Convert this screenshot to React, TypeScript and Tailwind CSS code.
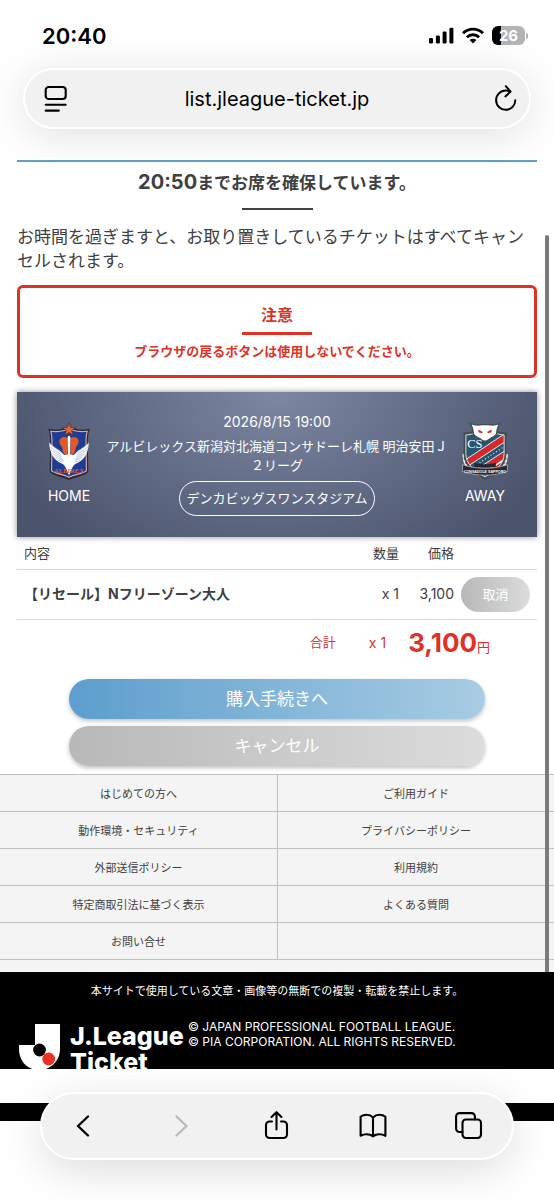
import React from "react";

interface FooterLink {
  label: string;
  href: string;
}

interface CartItem {
  id: number;
  name: string;
  quantity: number;
  price: string;
}

const footerLinks: FooterLink[] = [
  { label: "はじめての方へ", href: "#beginner" },
  { label: "ご利用ガイド", href: "#guide" },
  { label: "動作環境・セキュリティ", href: "#security" },
  { label: "プライバシーポリシー", href: "#privacy" },
  { label: "外部送信ポリシー", href: "#external" },
  { label: "利用規約", href: "#terms" },
  { label: "特定商取引法に基づく表示", href: "#law" },
  { label: "よくある質問", href: "#faq" },
  { label: "お問い合せ", href: "#contact" },
];

const cartItems: CartItem[] = [
  { id: 1, name: "【リセール】Nフリーゾーン大人", quantity: 1, price: "3,100" },
];

const StatusBar: React.FC = () => (
  <div className="flex h-[68px] items-center justify-between pt-[3px] pr-[26px] pl-[42px]">
    <span className="text-[22px] leading-6 font-semibold text-black">20:40</span>
    <div className="flex items-center gap-2">
      <svg width="25" height="17" viewBox="0 0 25 17">
        <rect x="0" y="11" width="4" height="5.5" rx="1.3" />
        <rect x="6.9" y="8.4" width="4" height="8.1" rx="1.3" />
        <rect x="13.6" y="4.600" width="4" height="11.900" rx="1.3" />
        <rect x="20.4" y="0.7" width="4" height="15.800" rx="1.3" />
      </svg>
      <svg width="22" height="17" viewBox="0 0 22 17">
        <g fill="none" stroke="#000" strokeWidth="2.900">
          <path d="M1 6.200a14.200 14.200 0 0 1 20 0" />
          <path d="M4.900 10.300a8.700 8.700 0 0 1 12.200 0" />
        </g>
        <path d="M11 16.6 7.6 13.1a4.8 4.8 0 0 1 6.8 0Z" />
      </svg>
      <div className="flex items-center gap-px">
        <div className="flex h-[19px] w-[33px] items-center justify-center rounded-md bg-linear-to-r from-black from-26% to-[#b3b3b3] to-26% text-[15px] leading-none font-bold text-white">
          26
        </div>
        <div className="h-[6px] w-[2px] rounded-r bg-[#b3b3b3]" />
      </div>
    </div>
  </div>
);

const AddressBar: React.FC = () => (
  <div className="mx-[23px] grid h-[61px] grid-cols-[1fr_auto_1fr] items-center rounded-full border-2 border-white bg-[#f1f1f1] px-3 shadow-[0_6px_44px_rgba(0,0,0,0.13)]">
    <button type="button" aria-label="ページメニュー" className="justify-self-start pl-[6px]">
      <svg
        width="26"
        height="28"
        viewBox="0 0 26 28"
        fill="none"
        stroke="#000"
        strokeWidth="2.1"
        strokeLinecap="round"
      >
        <rect x="2.7" y="2" width="20" height="12" rx="3" />
        <path d="M2.7 19.8h20M2.7 25.6h13.2" />
      </svg>
    </button>
    <span className="text-[20px] leading-6 text-black">list.jleague-ticket.jp</span>
    <button type="button" aria-label="再読み込み" className="justify-self-end">
      <svg
        width="24"
        height="28"
        viewBox="0 0 24 28"
        fill="none"
        stroke="#000"
        strokeWidth="2"
        strokeLinecap="round"
        strokeLinejoin="round"
      >
        <path d="M22.3 15.200a9.600 9.600 0 1 1-9.600-9.600c1.800 0 3 .2 4.400 1" />
        <path d="M12.800 1.200 17.600 6.600l-5.200 4.800" />
      </svg>
    </button>
  </div>
);

const HomeCrest: React.FC = () => (
  <svg width="42" height="58" viewBox="24 26 124 176" role="img" aria-label="アルビレックス新潟">
    <path
      d="M27 50c14 4 30 2 45-3l14-2 14 2c15 5 31 7 45 3-5 17-5 34-4 62l1 65c-14 14-35 11-56 22-21-11-42-8-56-22l1-65c1-28 1-45-4-62Z"
      fill="#1f3c94"
      stroke="#292936"
      strokeWidth="5"
    />
    <path
      d="M31 54c15 2 30 1 44-3l11-2 11 2c14 4 29 5 44 3-4 17-4 33-3 58l1 62c-14 11-34 9-53 20-19-11-39-9-53-20l1-62c1-25 1-41-3-58Z"
      fill="none"
      stroke="#dcac98"
      strokeWidth="3.500"
    />
    <path
      d="m86 28 5 14 15 1-12 9 5 15-13-9-13 9 5-15-12-9 15-1Z"
      fill="#e56538"
      stroke="#3a3438"
      strokeWidth="2"
    />
    <path
      d="M82 76c-6-8-24-6-25 7-1 10 6 16 9 22 0 14 6 22 16 22ZM90 76c6-8 24-6 25 7 1 10-6 16-9 22 0 14-6 22-16 22Z"
      fill="#e0592b"
    />
    <path
      d="M86 68c3 0 5 4 4 10l-1 46c8 4 13 3 17-3 8-12 24-15 40-33-1 33-15 55-38 64-8 4-10 8-17 24l-5 12-5-12c-7-16-9-20-17-24-23-9-37-31-38-64 16 18 32 21 40 33 4 6 9 7 17 3l-1-46c-1-6 1-10 4-10Z"
      fill="#fff"
    />
    <g stroke="#7f95cb" strokeWidth="1.6">
      <path d="m28 92 34 27M29 102l34 24M32 112l32 20M37 122l29 16M43 132l25 11M52 142l18 6" />
      <path d="m144 92-34 27M143 102l-34 24M140 112l-32 20M135 122l-29 16M129 132l-25 11M120 142l-18 6" />
    </g>
    <text
      x="86"
      y="181"
      textAnchor="middle"
      fontSize="20"
      fontFamily="Liberation Serif, serif"
      fontWeight="bold"
      fill="#d0603f"
    >
      ALBIREX
    </text>
  </svg>
);

const AwayCrest: React.FC = () => (
  <svg width="50" height="58" viewBox="20 28 150 176" role="img" aria-label="北海道コンサドーレ札幌">
    <path
      d="M25 122c0 22 5 38 15 46l15 4V134ZM166 122c0 22-5 38-15 46l-15 4V134Z"
      fill="#f1f1ef"
      stroke="#555"
      strokeWidth="3"
    />
    <path
      d="M30 139l22 9M34 152l19 5M161 139l-22 9M157 152l-19 5"
      stroke="#555"
      strokeWidth="3"
    />
    <path
      d="M34 64c13 0 24-3 34-9h54c10 6 21 9 34 9v60c0 37-29 54-61 75-32-21-61-38-61-75Z"
      fill="#285670"
      stroke="#444a52"
      strokeWidth="8"
    />
    <clipPath id="shield">
      <path d="M37 67c12 0 23-3 33-9h50c10 6 21 9 33 9v57c0 34-27 51-58 71-31-20-58-37-58-71Z" />
    </clipPath>
    <g clipPath="url(#shield)">
      <path d="m20 154 145-96v24L20 176Z" fill="#d5282a" />
      <path d="m20 206 145-96v60l-60 40Z" fill="#d5282a" />
      <path d="m20 153 145-96M20 177l145-95M20 204l145-95" stroke="#e9eef2" strokeWidth="3" />
      <path d="m20 190 145-95" stroke="#d8e2e8" strokeWidth="4" strokeDasharray="3 7" />
      <path d="m80 190 90-59" stroke="#fff" strokeWidth="5" />
    </g>
    <path
      d="M37 67c12 0 23-3 33-9h50c10 6 21 9 33 9v57c0 34-27 51-58 71-31-20-58-37-58-71Z"
      fill="none"
      stroke="#dfe2e3"
      strokeWidth="3"
    />
    <path
      d="M50 32c12 5 24 6 34 4h22c10 2 22 1 34-4-5 9-9 16-9 26 1 11-8 15-17 19-7 3-11 9-19 9s-12-6-19-9c-9-4-18-8-17-19 0-10-4-17-9-26Z"
      fill="#fff"
      stroke="#444a52"
      strokeWidth="4"
    />
    <path d="m75 51 14 7-4 4-10-3ZM115 51l-14 7 4 4 10-3Z" fill="#d22c35" />
    <text
      x="41"
      y="108"
      fontSize="38"
      fontFamily="Liberation Serif, serif"
      fill="#fff"
    >
      CS
    </text>
    <path d="M62 152c20 6 46 6 66 0v14H62Z" fill="#222831" />
    <path
      d="M27 158c42 14 94 14 136 0v20c-42 15-94 15-136 0Z"
      fill="#26282d"
      stroke="#c9c9c9"
      strokeWidth="2"
    />
    <text
      x="95"
      y="183"
      textAnchor="middle"
      fontSize="11"
      fontFamily="Liberation Sans, sans-serif"
      fontWeight="bold"
      fill="#fff"
    >
      CONSADOLE SAPPORO
    </text>
  </svg>
);

const MatchCard: React.FC = () => (
  <section className="mt-[14px] flex items-center gap-2 bg-[radial-gradient(ellipse_290px_200px_at_50%_0%,#7c87a2_0%,#4c546d_100%)] px-7 pt-5 pb-[21px] text-white shadow-[0_0_6px_rgba(0,0,0,0.45)]">
    <div className="flex w-12 shrink-0 flex-col items-center gap-[6px] text-sm">
      <HomeCrest />
      HOME
    </div>
    <div className="min-w-0 flex-1 text-center text-[13px]">
      <p className="text-sm">2026/8/15 19:00</p>
      <p className="mt-[5px] leading-[19px]">
        アルビレックス新潟対北海道コンサドーレ札幌 明治安田Ｊ２リーグ
      </p>
      <a
        href="#stadium"
        className="mt-[6px] inline-flex h-[35px] items-center rounded-full border border-white px-[7px] align-top"
      >
        デンカビッグスワンスタジアム
      </a>
    </div>
    <div className="flex w-12 shrink-0 flex-col items-center gap-[6px] text-sm">
      <AwayCrest />
      AWAY
    </div>
  </section>
);

const CartTable: React.FC = () => (
  <>
    <table className="w-full table-fixed text-[13px] leading-5">
      <thead>
        <tr className="h-8 border-b border-[#d9d9d9]">
          <th className="pl-[7px] text-left font-normal">内容</th>
          <th className="w-[60px] text-right font-normal">数量</th>
          <th className="w-[55px] text-right font-normal">価格</th>
          <td className="w-[83px]" />
        </tr>
      </thead>
      <tbody>
        {cartItems.map((item) => (
          <tr key={item.id} className="border-b border-[#d9d9d9]">
            <td className="pl-[7px] text-sm font-bold">{item.name}</td>
            <td className="text-right text-sm">x {item.quantity}</td>
            <td className="text-right text-sm">{item.price}</td>
            <td className="px-[7px] py-[7px]">
              <button
                type="button"
                className="block h-[35px] w-full rounded-full bg-linear-to-r from-[#b7b7b7] to-[#dcdcdc] text-white"
              >
                取消
              </button>
            </td>
          </tr>
        ))}
      </tbody>
    </table>
    <div className="flex h-[46px] items-center justify-end pr-[47px] text-[13px] text-[#de3226]">
      <span>合計</span>
      <span className="ml-[33px] text-sm">x 1</span>
      <span className="ml-[22px] flex items-baseline">
        <strong className="text-[26px] leading-8 font-bold">3,100</strong>円
      </span>
    </div>
  </>
);

const SiteFooter: React.FC = () => (
  <footer>
    <nav className="mt-2 bg-[#f4f4f4] pb-3">
      <ul className="grid grid-cols-2 border-t border-[#bfbfbf] text-[11px]">
        {footerLinks.map((link) => (
          <li
            key={link.label}
            className="h-[37px] border-b border-[#bfbfbf] even:border-l"
          >
            <a href={link.href} className="flex h-full items-center justify-center pt-[3px]">
              {link.label}
            </a>
          </li>
        ))}
        <li className="border-b border-l border-[#bfbfbf]" />
      </ul>
    </nav>
    <div className="h-[97px] overflow-hidden bg-black text-white">
      <p className="pt-[9px] text-center text-[11px] leading-5">
        本サイトで使用している文章・画像等の無断での複製・転載を禁止します。
      </p>
      <div className="mt-[18px] flex items-start pl-[18px]">
        <a href="#top" className="flex shrink-0 gap-[9px] pt-1">
          <svg width="43" height="47" viewBox="0 0 43 47">
            <path
              d="M17 1h25v25c0 12-9 21-21 21S1 38 1 26v-4h16Z"
              fill="#fff"
            />
            <circle cx="21.5" cy="27" r="6.4" />
            <circle cx="30.7" cy="36" r="6.4" fill="#ea3323" />
          </svg>
          <span className="w-[118px] text-[25px] leading-[26px] font-extrabold">
            J.League
            <br />
            Ticket
          </span>
        </a>
        <p className="text-[12px] leading-[15px]">
          © JAPAN PROFESSIONAL FOOTBALL LEAGUE.
          <br />© PIA CORPORATION. ALL RIGHTS RESERVED.
        </p>
      </div>
    </div>
    {/* page bottom edge showing behind the toolbar */}
    <div className="mt-[34px] h-[18px] bg-black" />
    <div className="h-[79px]" />
  </footer>
);

const Toolbar: React.FC = () => (
  <nav
    aria-label="ブラウザ"
    className="fixed inset-x-10 bottom-10 z-10 flex h-[68px] items-center justify-between rounded-full border-2 border-white bg-[#f1f1f1] px-[26px] shadow-[0_10px_44px_rgba(0,0,0,0.14)]"
  >
    <button type="button" aria-label="戻る" className="flex w-8 justify-center">
      <svg width="32" height="32" viewBox="0 0 32 32" fill="none" stroke="#000" strokeWidth="2.4" strokeLinecap="round" strokeLinejoin="round">
        <path d="M20 6.500 10 16l10 9.500" />
      </svg>
    </button>
    <button type="button" aria-label="進む" disabled className="flex w-8 justify-center">
      <svg width="32" height="32" viewBox="0 0 32 32" fill="none" stroke="#b9b9b9" strokeWidth="2.4" strokeLinecap="round" strokeLinejoin="round">
        <path d="M11.500 6.500l10 9.500-10 9.500" />
      </svg>
    </button>
    <button type="button" aria-label="共有" className="flex w-8 justify-center">
      <svg width="32" height="32" viewBox="0 0 32 32" fill="none" stroke="#000" strokeWidth="2.1" strokeLinecap="round" strokeLinejoin="round">
        <path d="M11 11.5H8.6a3.6 3.6 0 0 0-3.6 3.6v9.3A3.6 3.6 0 0 0 8.6 28h13.8a3.6 3.6 0 0 0 3.6-3.6v-9.3a3.6 3.6 0 0 0-3.6-3.6H20M15.5 19.500V2.500M10.500 7l5-4.800 5 4.800" />
      </svg>
    </button>
    <button type="button" aria-label="ブックマーク" className="flex w-8 justify-center">
      <svg width="32" height="32" viewBox="0 0 32 32" fill="none" stroke="#000" strokeWidth="2.1" strokeLinecap="round" strokeLinejoin="round">
        <path d="M15 7.400c-2-2-4-2.600-6.400-2.600-2.400 0-4.400.6-6 2v19c1.800-1 3.800-1.500 6-1.500 2.500 0 4.600.5 6.400 2.100 1.800-1.600 3.900-2.100 6.400-2.100 2.200 0 4.200.5 6 1.500v-19c-1.600-1.400-3.600-2-6-2-2.400 0-4.400.6-6.400 2.600ZM15 7.400v19" />
      </svg>
    </button>
    <button type="button" aria-label="タブ一覧" className="flex w-8 justify-center">
      <svg width="32" height="32" viewBox="0 0 32 32" fill="none" stroke="#000" strokeWidth="2.1" strokeLinecap="round" strokeLinejoin="round">
        <rect x="8.500" y="9.500" width="18.500" height="18.500" rx="3.400" />
        <path d="M8.500 22H5.500A3.400 3.400 0 0 1 2.100 18.500V6.500A3.400 3.400 0 0 1 5.500 3.100h12A3.400 3.400 0 0 1 20.900 6.500v3" />
      </svg>
    </button>
  </nav>
);

const App: React.FC = () => {
  return (
    <div className="relative min-h-screen overflow-x-hidden bg-white font-['Inter','Noto_Sans_CJK_JP',sans-serif] text-[#404040]">
      <header className="mb-[31px]">
        <StatusBar />
        <AddressBar />
      </header>
      <main className="relative px-[17px]">
        <div className="border-t-2 border-[#659dc6] pt-[6px] text-center">
          <h1 className="text-[17px] leading-7 font-bold">
            <span className="text-[20px]">20:50</span>までお席を確保しています。
          </h1>
          <div className="mx-auto mt-[11px] h-[2px] w-[71px] bg-[#404040]" />
        </div>
        <p className="mt-[15px] text-[17px] leading-6">
          お時間を過ぎますと、お取り置きしているチケットはすべてキャンセルされます。
        </p>
        <section className="mt-3 rounded-md border-3 border-[#de3226] pt-[15px] pb-[13px] text-center font-bold text-[#de3226]">
          <h2 className="text-[16px] leading-6">注意</h2>
          <div className="mx-auto mt-[5px] h-[3px] w-[70px] bg-[#de3226]" />
          <p className="mt-[5px] text-[13px] leading-[22px]">
            ブラウザの戻るボタンは使用しないでください。
          </p>
        </section>
        <MatchCard />
        <CartTable />
        <div className="mx-auto mt-[13px] flex w-4/5 flex-col gap-[7px] text-[17px] text-white">
          <button
            type="button"
            className="h-10 rounded-full bg-linear-to-r from-[#5c9ecd] to-[#a8cce3] pt-[3px] shadow-[0_2px_4px_rgba(0,0,0,0.25)]"
          >
            購入手続きへ
          </button>
          <button
            type="button"
            className="h-10 rounded-full bg-linear-to-r from-[#b8b8b8] to-[#dcdcdc] pt-[3px] shadow-[0_2px_4px_rgba(0,0,0,0.25)]"
          >
            キャンセル
          </button>
        </div>
      </main>
      <SiteFooter />
      {/* scroll indicator */}
      <div className="absolute top-[235px] right-[5px] h-[737px] w-1 rounded-t-full bg-[#7a7a7a]" />
      <Toolbar />
    </div>
  );
};

export default App;
